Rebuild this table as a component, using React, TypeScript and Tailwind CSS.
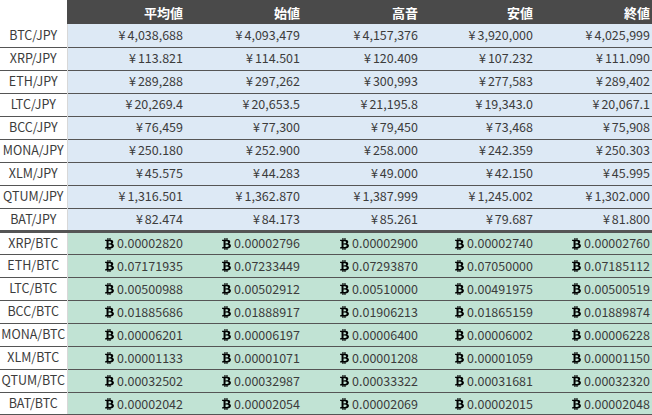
import { FaBtc } from "react-icons/fa";

const HEADERS: [string, string][] = [
  ["平均値", "w-[118px]"],
  ["始値", "w-[117px]"],
  ["高音", "w-[118px]"],
  ["安値", "w-[115px]"],
  ["終値", "w-[117px]"],
];

const JPY: [string, string[]][] = [
  ["BTC/JPY", ["4,038,688", "4,093,479", "4,157,376", "3,920,000", "4,025,999"]],
  ["XRP/JPY", ["113.821", "114.501", "120.409", "107.232", "111.090"]],
  ["ETH/JPY", ["289,288", "297,262", "300,993", "277,583", "289,402"]],
  ["LTC/JPY", ["20,269.4", "20,653.5", "21,195.8", "19,343.0", "20,067.1"]],
  ["BCC/JPY", ["76,459", "77,300", "79,450", "73,468", "75,908"]],
  ["MONA/JPY", ["250.180", "252.900", "258.000", "242.359", "250.303"]],
  ["XLM/JPY", ["45.575", "44.283", "49.000", "42.150", "45.995"]],
  ["QTUM/JPY", ["1,316.501", "1,362.870", "1,387.999", "1,245.002", "1,302.000"]],
  ["BAT/JPY", ["82.474", "84.173", "85.261", "79.687", "81.800"]],
];

const BTC: [string, string[]][] = [
  ["XRP/BTC", ["0.00002820", "0.00002796", "0.00002900", "0.00002740", "0.00002760"]],
  ["ETH/BTC", ["0.07171935", "0.07233449", "0.07293870", "0.07050000", "0.07185112"]],
  ["LTC/BTC", ["0.00500988", "0.00502912", "0.00510000", "0.00491975", "0.00500519"]],
  ["BCC/BTC", ["0.01885686", "0.01888917", "0.01906213", "0.01865159", "0.01889874"]],
  ["MONA/BTC", ["0.00006201", "0.00006197", "0.00006400", "0.00006002", "0.00006228"]],
  ["XLM/BTC", ["0.00001133", "0.00001071", "0.00001208", "0.00001059", "0.00001150"]],
  ["QTUM/BTC", ["0.00032502", "0.00032987", "0.00033322", "0.00031681", "0.00032320"]],
  ["BAT/BTC", ["0.00002042", "0.00002054", "0.00002069", "0.00002015", "0.00002048"]],
];

export default function App() {
  return (
    <div
      className="w-[652px] h-[415px] overflow-hidden bg-white text-[12.5px] text-[#3c3c3c]"
      style={{ fontFamily: '"Noto Sans CJK JP", "Noto Sans", sans-serif' }}
    >
      <table className="w-[652px] border-collapse table-fixed">
        <thead>
          <tr className="h-[24px]">
            <th className="w-[67px] bg-white" />
            {HEADERS.map(([h, w]) => (
              <th
                key={h}
                className={`${w} bg-[#4a4a4a] text-white text-[13px] font-bold text-right pr-[2px] leading-none`}
              >
                {h}
              </th>
            ))}
          </tr>
        </thead>
        <tbody>
          {JPY.map(([pair, vals], i) => (
            <tr
              key={pair}
              className={`h-[23px] border-b border-[#555] ${i === JPY.length - 1 ? "border-b-[3px]" : ""}`}
            >
              <td className="text-center leading-none border-r border-[#d8d8d8]">{pair}</td>
              {vals.map((v, j) => (
                <td key={j} className="bg-[#dde9f5] text-right pr-[2px] leading-none">
                  <span className="mr-[2px]">¥</span>
                  {v}
                </td>
              ))}
            </tr>
          ))}
          {BTC.map(([pair, vals], i) => (
            <tr
              key={pair}
              className={`h-[23px] border-b border-[#555] ${i === BTC.length - 1 ? "border-b-2" : ""}`}
            >
              <td className="text-center leading-none border-r border-[#d8d8d8]">{pair}</td>
              {vals.map((v, j) => (
                <td key={j} className="bg-[#c1e3d4] text-right pr-[2px] leading-none">
                  <span className="inline-flex items-center gap-[3px] align-middle">
                    <FaBtc className="w-[9px] h-[12px] text-black" />
                    {v}
                  </span>
                </td>
              ))}
            </tr>
          ))}
        </tbody>
      </table>
    </div>
  );
}
